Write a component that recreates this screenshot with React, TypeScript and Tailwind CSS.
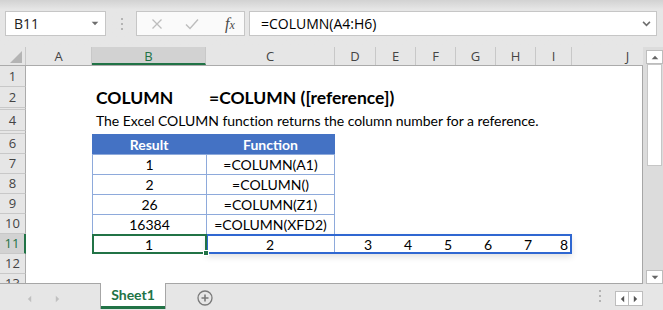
import React from "react";

const cols = [
  { k: "A", w: "w-[66px]" },
  { k: "B", w: "w-[114px]" },
  { k: "C", w: "w-[129px]" },
  { k: "D", w: "w-[41px]" },
  { k: "E", w: "w-[40px]" },
  { k: "F", w: "w-[40px]" },
  { k: "G", w: "w-[40px]" },
  { k: "H", w: "w-[40px]" },
  { k: "I", w: "w-[36px]" },
  { k: "J", w: "w-[112px]" },
];

const rows: { n: string; h: string; hidden?: boolean }[] = [
  { n: "1", h: "h-[21px]" },
  { n: "2", h: "h-[21px]" },
  { n: "3", h: "h-[2px]", hidden: true },
  { n: "4", h: "h-[21px]" },
  { n: "5", h: "h-[3px]", hidden: true },
  { n: "6", h: "h-[20px]" },
  { n: "7", h: "h-[20px]" },
  { n: "8", h: "h-[20px]" },
  { n: "9", h: "h-[20px]" },
  { n: "10", h: "h-[20px]" },
  { n: "11", h: "h-[20px]" },
  { n: "12", h: "h-[20px]" },
  { n: "13", h: "h-[20px]" },
];

const tableRows = [
  ["1", "=COLUMN(A1)"],
  ["2", "=COLUMN()"],
  ["26", "=COLUMN(Z1)"],
  ["16384", "=COLUMN(XFD2)"],
];

const cellFont = "font-['Lato','Liberation_Sans',sans-serif] text-[14px] text-black";

function Tri({ dir, className }: { dir: "up" | "down" | "left" | "right"; className: string }) {
  const pts = {
    up: "0,5 4,1 8,5",
    down: "0,1 4,5 8,1",
    left: "5,0 1,4 5,8",
    right: "1,0 5,4 1,8",
  }[dir];
  const box = dir === "up" || dir === "down" ? "0 0 8 6" : "0 0 6 8";
  return (
    <svg viewBox={box} className={className}>
      <polygon points={pts} fill="currentColor" />
    </svg>
  );
}

function Dots({ className }: { className: string }) {
  return (
    <div className={`flex flex-col gap-[3px] ${className}`}>
      <span className="w-[2px] h-[2px] bg-[#b4b4b4]" />
      <span className="w-[2px] h-[2px] bg-[#b4b4b4]" />
      <span className="w-[2px] h-[2px] bg-[#b4b4b4]" />
    </div>
  );
}

function RowContent({ n }: { n: string }) {
  if (n === "2") {
    return (
      <div className="flex items-center h-full font-['Lato','Liberation_Sans',sans-serif] font-bold text-[17.5px] leading-none text-black whitespace-nowrap">
        <div className="w-[66px]" />
        <div className="w-[114px] pl-[4px]">COLUMN</div>
        <div className="pl-[3px]">=COLUMN ([reference])</div>
      </div>
    );
  }
  if (n === "4") {
    return (
      <div className={`flex items-center h-full whitespace-nowrap ${cellFont}`}>
        <div className="w-[66px]" />
        <div className="pl-[4px] tracking-[-0.05px]">The Excel COLUMN function returns the column number for a reference.</div>
      </div>
    );
  }
  if (n === "6") {
    return (
      <div className="flex h-full font-['Lato','Liberation_Sans',sans-serif] font-bold text-[14px] text-white">
        <div className="w-[66px]" />
        <div className="w-[114px] bg-[#4472c4] flex items-center justify-center">Result</div>
        <div className="w-[129px] bg-[#4472c4] flex items-center justify-center">Function</div>
      </div>
    );
  }
  const idx = ["7", "8", "9", "10"].indexOf(n);
  if (idx >= 0) {
    const [a, b] = tableRows[idx];
    return (
      <div className={`flex h-full ${cellFont}`}>
        <div className="w-[66px]" />
        <div className="w-[114px] border-t border-l border-[#8eaadb] flex items-center justify-center">{a}</div>
        <div className="w-[129px] border-t border-x border-[#8eaadb] flex items-center justify-center">{b}</div>
      </div>
    );
  }
  if (n === "11") {
    const nums = [
      { v: "3", w: "w-[41px]" },
      { v: "4", w: "w-[40px]" },
      { v: "5", w: "w-[40px]" },
      { v: "6", w: "w-[40px]" },
      { v: "7", w: "w-[40px]" },
      { v: "8", w: "w-[36px]" },
    ];
    return (
      <div className={`relative flex h-full ${cellFont}`}>
        <div className="w-[66px]" />
        <div className="w-[114px] border-t border-[#8eaadb] flex items-center justify-center">1</div>
        <div className="w-[129px] border-t border-r border-[#8eaadb] flex items-center justify-center">2</div>
        {nums.map((c) => (
          <div key={c.v} className={`${c.w} flex items-center justify-end pr-[4px]`}>
            {c.v}
          </div>
        ))}
        {/* range outline C11:I11 */}
        <div className="absolute left-[180px] top-0 w-[366px] h-[20px] border-2 border-[#2f67d1] shadow-[0_3px_6px_rgba(0,0,0,0.12)] pointer-events-none" />
        {/* active cell B11 */}
        <div className="absolute left-[66px] top-0 w-[115px] h-[20px] border-2 border-[#217346] pointer-events-none" />
        <div className="absolute left-[177px] top-[16px] w-[6px] h-[6px] bg-[#217346] border border-white" />
      </div>
    );
  }
  return null;
}

export default function App() {
  return (
    <div className="w-[663px] h-[310px] overflow-hidden bg-[#e6e6e6] flex flex-col font-['Open_Sans','Noto_Sans',sans-serif] select-none">
      {/* formula bar */}
      <div className="h-[47px] flex flex-col bg-gradient-to-b from-[#d2d2d2] via-[#e6e6e6] via-20% to-[#e6e6e6]">
        <div className="flex items-start mt-[11px] h-[25px]">
          <div className="ml-[5px] w-[101px] h-[25px] bg-white border border-[#c6c6c6] flex items-center justify-between pl-[8px] pr-[6px]">
            <span className="text-[14px] leading-none text-[#222] font-['Open_Sans',sans-serif]">B11</span>
            <Tri dir="down" className="w-[8px] h-[5px] text-[#6e6e6e]" />
          </div>
          <Dots className="ml-[15px] mt-[7px]" />
          <div className="ml-[13px] w-[109px] h-[25px] bg-[#fafafa] border border-[#c6c6c6] flex items-center">
            <svg viewBox="0 0 12 12" className="w-[12px] h-[12px] ml-[14px]">
              <path d="M1.5 1.5 L10.5 10.5 M10.5 1.5 L1.5 10.5" stroke="#bdbdbd" strokeWidth="1.3" fill="none" />
            </svg>
            <svg viewBox="0 0 14 12" className="w-[14px] h-[12px] ml-[22px]">
              <path d="M1 6.5 L5 10.5 L13 1.5" stroke="#bdbdbd" strokeWidth="1.4" fill="none" />
            </svg>
            <span className="ml-[26px] font-['Liberation_Serif',serif] italic text-[16px] text-[#4a4a4a] leading-none">
              f<span className="text-[12px]">x</span>
            </span>
          </div>
          <div className="ml-[4px] w-[408px] h-[25px] bg-white border border-[#c6c6c6] flex items-center justify-between pl-[11px] pr-[5px]">
            <span className="text-[14px] leading-none text-black font-['Open_Sans',sans-serif]">=COLUMN(A4:H6)</span>
            <svg viewBox="0 0 10 7" className="w-[9px] h-[6px]">
              <path d="M1 1 L5 5 L9 1" stroke="#6e6e6e" strokeWidth="1.8" fill="none" />
            </svg>
          </div>
        </div>
      </div>

      {/* sheet area */}
      <div className="flex h-[237px]">
        <div className="w-[643px] flex flex-col">
          {/* column headers */}
          <div className="h-[19px] flex bg-[#e6e6e6] border-b border-[#ababab] overflow-hidden">
            <div className="w-[26px] shrink-0 flex items-end justify-end pr-[3px] pb-[2px] border-r border-[#c8c8c8]">
              <svg viewBox="0 0 12 12" className="w-[12px] h-[12px]">
                <polygon points="12,0 12,12 0,12" fill="#b4b4b4" />
              </svg>
            </div>
            {cols.map((c) => (
              <div
                key={c.k}
                className={`${c.w} shrink-0 flex items-center justify-center text-[13px] leading-none border-r ${
                  c.k === "B"
                    ? "bg-[#d2d2d2] text-[#217346] border-b-2 border-b-[#217346] border-r-[#c8c8c8] pt-[2px]"
                    : "text-[#444] border-[#c8c8c8]"
                }`}
              >
                {c.k}
              </div>
            ))}
          </div>
          {/* rows */}
          <div className="flex-1 flex flex-col overflow-hidden bg-white border-r border-b border-[#a6a6a6]">
            {rows.map((r) => (
              <div key={r.n} className={`${r.h} shrink-0 flex`}>
                <div
                  className={`w-[26px] shrink-0 flex items-center justify-center text-[13px] leading-none border-b border-[#c8c8c8] ${
                    r.n === "11"
                      ? "bg-[#d2d2d2] text-[#217346] border-r-2 border-r-[#217346]"
                      : "bg-[#e6e6e6] text-[#444] border-r border-r-[#ababab]"
                  }`}
                >
                  {r.hidden ? null : r.n}
                </div>
                <div className="flex-1">
                  <RowContent n={r.n} />
                </div>
              </div>
            ))}
          </div>
        </div>
        {/* vertical scrollbar */}
        <div className="w-[20px] flex flex-col bg-[#dcdcdc] pl-[3px] pt-[3px]">
          <div className="w-[17px] h-[14px] bg-white border border-[#bdbdbd] flex items-center justify-center">
            <Tri dir="up" className="w-[8px] h-[5px] text-[#666]" />
          </div>
          <div className="w-[15px] h-[102px] bg-white border border-[#c6c6c6] ml-[1px]" />
          <div className="flex-1" />
          <div className="w-[17px] h-[14px] bg-white border border-[#bdbdbd] flex items-center justify-center">
            <Tri dir="down" className="w-[8px] h-[5px] text-[#666]" />
          </div>
        </div>
      </div>

      {/* sheet tabs */}
      <div className="flex-1 flex items-start">
        <div className="w-[100px] flex items-center pt-[11px] pl-[27px] gap-[23px]">
          <Tri dir="left" className="w-[5px] h-[8px] text-[#c0c0c0]" />
          <Tri dir="right" className="w-[5px] h-[8px] text-[#c0c0c0]" />
        </div>
        <div className="w-[66px] h-[26px] bg-white border-x border-[#a6a6a6] -mt-[1px] flex flex-col">
          <div className="flex-1 flex items-center justify-center text-[14px] font-bold text-[#217346] font-['Lato',sans-serif]">
            Sheet1
          </div>
          <div className="h-[3px] bg-[#217346]" />
        </div>
        <svg viewBox="0 0 16 16" className="w-[16px] h-[16px] ml-[31px] mt-[6px]">
          <circle cx="8" cy="8" r="7" stroke="#7a7a7a" strokeWidth="1.3" fill="none" />
          <path d="M8 4.5 V11.5 M4.5 8 H11.5" stroke="#7a7a7a" strokeWidth="1.6" />
        </svg>
        <div className="flex-1" />
        <Dots className="mt-[6px] mr-[14px]" />
        <div className="flex mt-[7px] mr-[20px]">
          <div className="w-[14px] h-[15px] bg-white border border-[#bdbdbd] flex items-center justify-center">
            <Tri dir="left" className="w-[5px] h-[8px] text-[#555]" />
          </div>
          <div className="w-[14px] h-[15px] bg-white border border-[#bdbdbd] border-l-0 flex items-center justify-center">
            <Tri dir="right" className="w-[5px] h-[8px] text-[#555]" />
          </div>
        </div>
      </div>
    </div>
  );
}
